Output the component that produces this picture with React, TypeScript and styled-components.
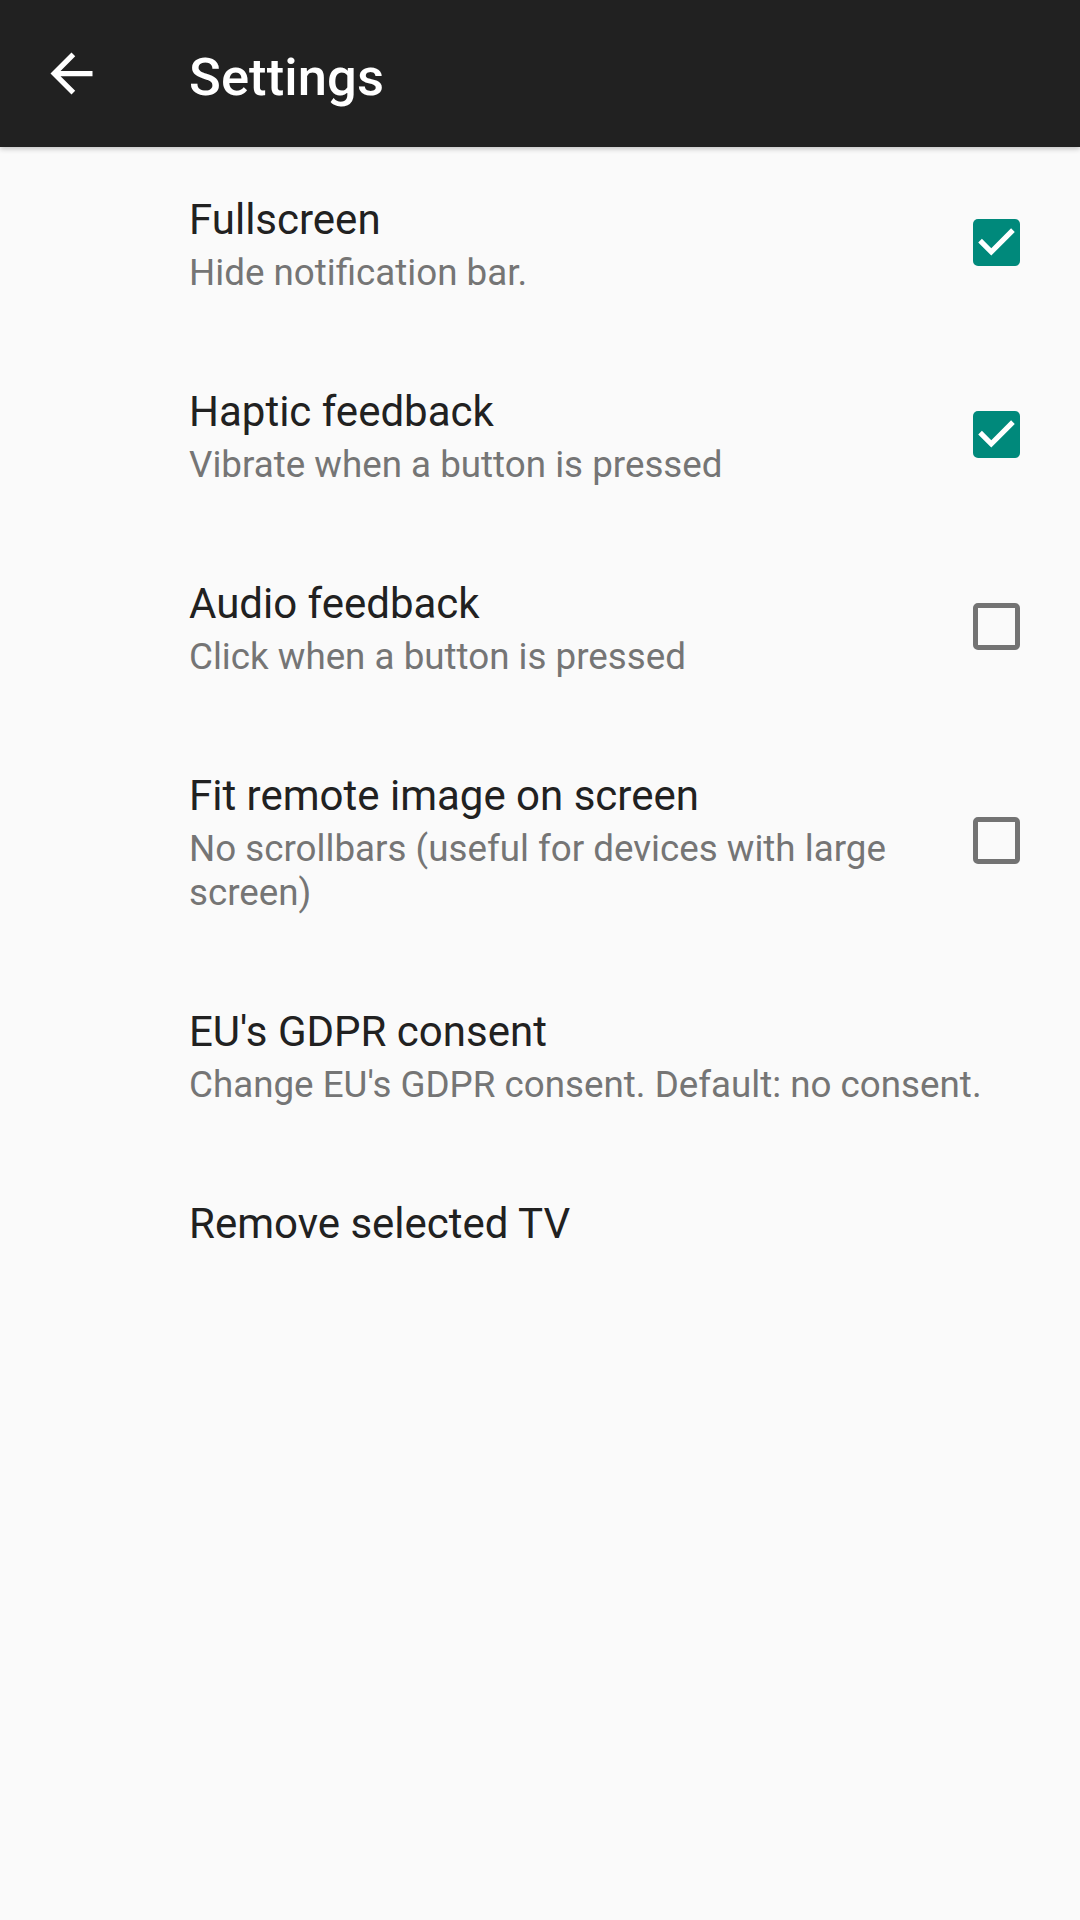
import React, { useState } from "react";
import styled, { createGlobalStyle } from "styled-components";

const GlobalStyle = createGlobalStyle`
  html, body { margin: 0; padding: 0; background: #fafafa; }
  body { font-family: Roboto, "Noto Sans", "Liberation Sans", sans-serif; -webkit-font-smoothing: antialiased; }
  * { box-sizing: border-box; }
`;

interface Pref {
  key: string;
  title: string;
  summary?: string;
  checkbox?: boolean;
  checked?: boolean;
}

const prefs: Pref[] = [
  { key: "fullscreen", title: "Fullscreen", summary: "Hide notification bar.", checkbox: true, checked: true },
  { key: "haptic", title: "Haptic feedback", summary: "Vibrate when a button is pressed", checkbox: true, checked: true },
  { key: "audio", title: "Audio feedback", summary: "Click when a button is pressed", checkbox: true, checked: false },
  {
    key: "fit",
    title: "Fit remote image on screen",
    summary: "No scrollbars (useful for devices with large screen)",
    checkbox: true,
    checked: false,
  },
  { key: "gdpr", title: "EU's GDPR consent", summary: "Change EU's GDPR consent. Default: no consent." },
  { key: "remove", title: "Remove selected TV" },
];

const BackArrow = () => (
  <svg viewBox="0 0 24 24" width="63" height="63" fill="#ffffff">
    <path d="M20 11H7.83l5.59-5.59L12 4l-8 8 8 8 1.41-1.41L7.83 13H20v-2z" />
  </svg>
);

const CheckMark = () => (
  <svg viewBox="0 0 18 18" width="47" height="47" fill="#ffffff">
    <path d="M7 14l-5-5 1.41-1.41L7 11.17l7.59-7.59L16 5l-9 9z" />
  </svg>
);

export default function App() {
  const [values, setValues] = useState<Record<string, boolean>>(() =>
    Object.fromEntries(prefs.filter((p) => p.checkbox).map((p) => [p.key, !!p.checked]))
  );

  const toggle = (key: string) => setValues((v) => ({ ...v, [key]: !v[key] }));

  return (
    <Page>
      <GlobalStyle />
      <Toolbar>
        <NavButton aria-label="Back">
          <BackArrow />
        </NavButton>
        <Title>Settings</Title>
      </Toolbar>

      <List>
        {prefs.map((p) => (
          <Row key={p.key} onClick={() => p.checkbox && toggle(p.key)}>
            <TextCol>
              <PrefTitle>{p.title}</PrefTitle>
              {p.summary && <Summary>{p.summary}</Summary>}
            </TextCol>
            {p.checkbox && (
              <WidgetFrame>
                <Box checked={values[p.key]}>{values[p.key] && <CheckMark />}</Box>
              </WidgetFrame>
            )}
          </Row>
        ))}
      </List>
    </Page>
  );
}

// --- Styled Components ---
const Page = styled.div`
  min-height: 1920px;
  background: #fafafa;
`;

const Toolbar = styled.header`
  position: relative;
  z-index: 1;
  height: 147px;
  display: flex;
  align-items: center;
  padding-left: 40px;
  background: #212121;
  box-shadow: 0 2px 5px rgba(0, 0, 0, 0.22);
`;

const NavButton = styled.div`
  width: 63px;
  height: 63px;
  display: flex;
  align-items: center;
  justify-content: center;
`;

const Title = styled.h1`
  margin: 0 0 0 86px;
  padding-top: 6px;
  font-size: 52.5px;
  font-weight: 500;
  color: #ffffff;
  letter-spacing: 0.1px;
`;

const List = styled.div`
  display: flex;
  flex-direction: column;
`;

const Row = styled.div`
  display: flex;
  align-items: center;
  padding: 48px 52px 44px 189px;
  cursor: pointer;
`;

const TextCol = styled.div`
  flex: 1;
  min-width: 0;
  display: flex;
  flex-direction: column;
`;

const PrefTitle = styled.div`
  font-size: 42px;
  line-height: 49px;
  color: #212121;
`;

const Summary = styled.div`
  margin-top: 7px;
  font-size: 36.75px;
  line-height: 44px;
  color: #757575;
`;

const WidgetFrame = styled.div`
  width: 63px;
  height: 63px;
  margin: 0 0 5px 60px;
  display: flex;
  align-items: center;
  justify-content: center;
  flex-shrink: 0;
`;

const Box = styled.div<{ checked: boolean }>`
  width: 47px;
  height: 47px;
  border-radius: 5px;
  display: flex;
  align-items: center;
  justify-content: center;
  background: ${(p) => (p.checked ? "#00897b" : "transparent")};
  border: ${(p) => (p.checked ? "none" : "5px solid #737373")};
`;
